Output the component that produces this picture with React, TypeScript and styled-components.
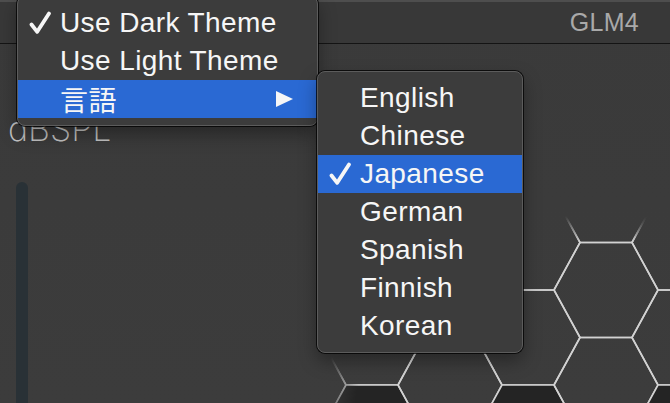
import styled, { createGlobalStyle } from "styled-components";

const GlobalStyle = createGlobalStyle`
	html, body {
		margin: 0;
		padding: 0;
		background: #3b3b3b;
	}
	body {
		font-family: "Liberation Sans", Arial, sans-serif;
	}
`;

const Window = styled.div`
	position: relative;
	width: 670px;
	height: 403px;
	overflow: hidden;
	display: flex;
	flex-direction: column;
	background: linear-gradient(180deg, #3a3a3a 0%, #3c3c3c 100%);
`;

const TopBar = styled.div`
	height: 41px;
	display: flex;
	align-items: center;
	justify-content: flex-end;
	padding-right: 31px;
	background: #383838;
	border-top: 2px solid #4e4e4e;
	border-bottom: 1px solid #141414;
	box-sizing: content-box;
`;

const Title = styled.div`
	font-size: 25px;
	color: #a9a9a9;
	letter-spacing: 0.3px;
`;

const Body = styled.div`
	flex: 1;
	display: flex;
`;

const Side = styled.div`
	display: flex;
	flex-direction: column;
	padding-left: 8px;
`;

const Unit = styled.div`
	margin-top: 68px;
	font-family: Inter, "Noto Sans", sans-serif;
	font-weight: 200;
	font-size: 34px;
	line-height: 1;
	letter-spacing: 0;
	color: #c4c4c4;
`;

const Meter = styled.div`
	margin: 36px 0 -10px 8px;
	width: 12px;
	flex: 1;
	border-radius: 6px;
	background: #293136;
`;

const Hive = styled.svg`
	position: absolute;
	left: 0;
	top: 0;
	pointer-events: none;
`;

const Menu = styled.div<{ $left: number; $top: number; $width: number }>`
	position: absolute;
	left: ${(p) => p.$left}px;
	top: ${(p) => p.$top}px;
	width: ${(p) => p.$width}px;
	padding: 7px 0 7px;
	box-sizing: border-box;
	background: #3c3c3c;
	border: 1px solid #5c5c5c;
	border-radius: 8px;
	box-shadow: 0 0 0 1px rgba(0, 0, 0, 0.75), 0 8px 18px rgba(0, 0, 0, 0.35);
	overflow: hidden;
`;

const Row = styled.div<{ $active?: boolean }>`
	height: 38px;
	display: flex;
	align-items: center;
	padding: 0 23px 0 11px;
	background: ${(p) => (p.$active ? "#2a69d3" : "transparent")};
	color: #f6f6f6;
	font-size: 28px;
	letter-spacing: 0.4px;
`;

const CheckCell = styled.div`
	width: 31px;
	height: 38px;
	display: flex;
	align-items: center;
	flex-shrink: 0;
`;

const Label = styled.div`
	flex: 1;
	white-space: nowrap;
	font-family: "Liberation Sans", "Noto Sans CJK JP", sans-serif;
`;

const Arrow = styled.div`
	width: 0;
	height: 0;
	margin-right: 1px;
	border-top: 8.5px solid transparent;
	border-bottom: 8.5px solid transparent;
	border-left: 17px solid #f6f6f6;
`;

const Check = () => (
	<svg width="23" height="24" viewBox="0 0 23 24">
		<path
			d="M2.5 13.5 L8.2 20.8 L20 2.5"
			fill="none"
			stroke="#f6f6f6"
			strokeWidth="3.8"
			strokeLinecap="round"
			strokeLinejoin="round"
		/>
	</svg>
);

const S = 52;
const H = 47.5;

const hexes = (() => {
	const out: { x: number; y: number; dark: boolean }[] = [];
	for (let k = -2; k <= 5; k++) {
		const cx = 372 + 78 * k;
		const base = k % 2 === 0 ? 337.5 : 290;
		for (let j = -3; j <= 2; j++) {
			const cy = base + 95 * j;
			out.push({ x: cx, y: cy, dark: Math.abs(cy - 432.5) < 1 });
		}
	}
	return out;
})();

const hexPoints = (cx: number, cy: number) =>
	[
		[cx - S, cy],
		[cx - S / 2, cy - H],
		[cx + S / 2, cy - H],
		[cx + S, cy],
		[cx + S / 2, cy + H],
		[cx - S / 2, cy + H],
	]
		.map((p) => p.join(","))
		.join(" ");

const mainItems = [
	{ label: "Use Dark Theme", checked: true },
	{ label: "Use Light Theme" },
	{ label: "言語", active: true, sub: true },
];

const languages = ["English", "Chinese", "Japanese", "German", "Spanish", "Finnish", "Korean"];

const App = () => {
	const current = "Japanese";
	return (
		<Window>
			<GlobalStyle />
			<TopBar>
				<Title>GLM4</Title>
			</TopBar>
			<Body>
				<Side>
					<Unit>dBSPL</Unit>
					<Meter />
				</Side>
			</Body>

			<Hive width="670" height="403" viewBox="0 0 670 403">
				<defs>
					<radialGradient id="fadeSide" gradientUnits="userSpaceOnUse" cx="560" cy="430" r="240">
						<stop offset="0.86" stopColor="#fff" stopOpacity="1" />
						<stop offset="1" stopColor="#fff" stopOpacity="0" />
					</radialGradient>
					<linearGradient id="fadeTop" gradientUnits="userSpaceOnUse" x1="0" y1="216" x2="0" y2="242">
						<stop offset="0" stopColor="#fff" stopOpacity="0" />
						<stop offset="1" stopColor="#fff" stopOpacity="1" />
					</linearGradient>
					<mask id="sideMask">
						<rect x="0" y="0" width="670" height="403" fill="url(#fadeSide)" />
					</mask>
					<mask id="topMask">
						<rect x="0" y="0" width="670" height="403" fill="url(#fadeTop)" />
					</mask>
				</defs>
				<g mask="url(#topMask)">
					<g mask="url(#sideMask)">
						{hexes.map((h, i) => (
							<polygon
								key={i}
								points={hexPoints(h.x, h.y)}
								fill={h.dark ? "#242424" : "none"}
								stroke="#d2d2d2"
								strokeWidth="1.6"
							/>
						))}
					</g>
				</g>
			</Hive>

			<Menu $left={17} $top={-4} $width={301}>
				{mainItems.map((item) => (
					<Row key={item.label} $active={item.active}>
						<CheckCell>{item.checked && <Check />}</CheckCell>
						<Label>{item.label}</Label>
						{item.sub && <Arrow />}
					</Row>
				))}
			</Menu>

			<Menu $left={317} $top={71} $width={206}>
				{languages.map((lang) => (
					<Row key={lang} $active={lang === current}>
						<CheckCell>{lang === current && <Check />}</CheckCell>
						<Label>{lang}</Label>
					</Row>
				))}
			</Menu>
		</Window>
	);
};

export default App;
